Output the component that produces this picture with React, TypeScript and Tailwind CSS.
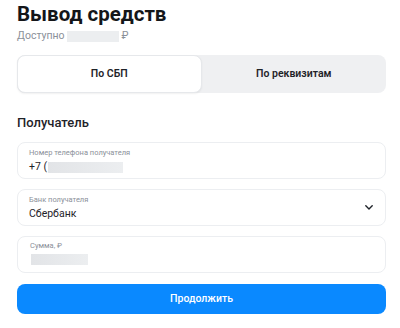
export default function App() {
  return (
    <div
      className="w-[400px] h-[328px] bg-white pl-[17px] pr-[14px] text-[#1f2329] overflow-hidden"
      style={{ fontFamily: "Roboto, 'Noto Sans', sans-serif" }}
    >
      {/* Header */}
      <h1 className="pt-[1px] text-[20.5px] leading-[26px] font-bold text-[#141619]">Вывод средств</h1>
      <div className="mt-[2px] flex items-center h-[14px] text-[10.5px] text-[#8b9099]">
        <span>Доступно</span>
        <span className="ml-[2px] w-[52px] h-[11px] bg-[#eceef0]" />
        <span className="ml-[3px]">₽</span>
      </div>

      {/* Tabs */}
      <div className="mt-[12px] grid grid-cols-2 h-[38px] rounded-lg bg-[#eff0f2]">
        <button className="rounded-lg bg-white border border-[#e6e8eb] shadow-[0_1px_2px_rgba(0,0,0,0.06)] text-[10.5px] font-semibold">
          По СБП
        </button>
        <button className="text-[10.5px] font-semibold">По реквизитам</button>
      </div>

      {/* Recipient */}
      <h2 className="mt-[21px] text-[13px] leading-[18px] font-medium">Получатель</h2>

      <div className="mt-[10px] flex flex-col gap-[10px]">
        <div className="h-[37px] rounded-lg border border-[#eceef1] px-[11px] pt-[5px]">
          <div className="text-[7.5px] leading-[10px] text-[#8b9099]">Номер телефона получателя</div>
          <div className="mt-[2px] flex items-center text-[10.5px] leading-[14px]">
            <span>+7 (</span>
            <span className="ml-[1px] w-[75px] h-[11px] bg-gradient-to-r from-[#e2e4e7] to-[#eceef0]" />
          </div>
        </div>

        <div className="h-[37px] rounded-lg border border-[#eceef1] pl-[11px] pr-[12px] flex items-center justify-between">
          <div>
            <div className="text-[7.5px] leading-[10px] text-[#8b9099]">Банк получателя</div>
            <div className="mt-[2px] text-[10.5px] leading-[14px]">Сбербанк</div>
          </div>
          <svg width="8" height="5" viewBox="0 0 8 5" fill="none">
            <path d="M0.8 0.8L4 4L7.2 0.8" stroke="#1f2329" strokeWidth="1.4" strokeLinecap="round" strokeLinejoin="round" />
          </svg>
        </div>

        <div className="h-[37px] rounded-lg border border-[#eceef1] px-[12px] pt-[4px]">
          <div className="text-[7.5px] leading-[10px] text-[#8b9099]">Сумма, ₽</div>
          <div className="mt-[3px] ml-[1px] w-[57px] h-[11px] bg-gradient-to-r from-[#e2e4e7] to-[#eceef0]" />
        </div>
      </div>

      <button className="mt-[11px] w-full h-[30px] rounded-lg bg-[#0a89ff] text-white text-[10.5px] font-medium">
        Продолжить
      </button>
    </div>
  );
}
